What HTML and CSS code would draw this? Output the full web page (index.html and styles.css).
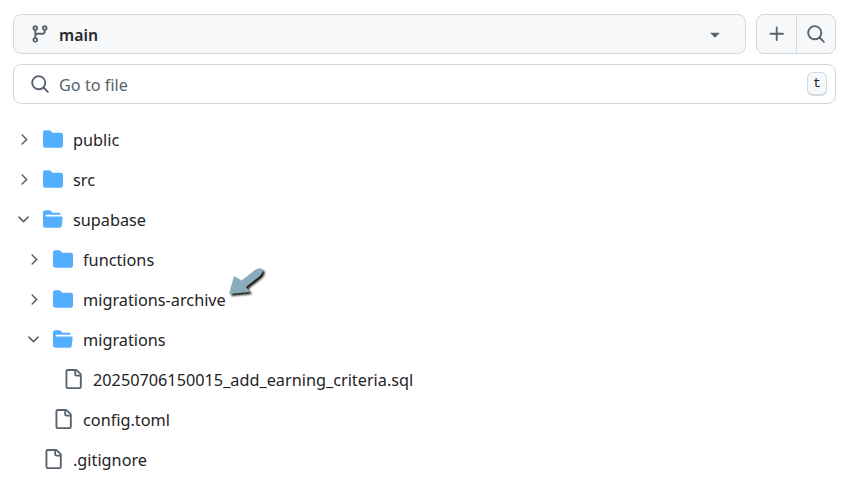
FILE: index.html
```html
<!DOCTYPE html>
<html lang="en">
<head>
  <meta charset="UTF-8" />
  <title>Files</title>
  <link rel="stylesheet" href="styles.css">
</head>
<body>
  <svg class="defs" width="0" height="0" aria-hidden="true">
    <symbol id="i-branch" viewBox="0 0 16 16"><path d="M9.5 3.25a2.25 2.25 0 1 1 3 2.122V6A2.5 2.5 0 0 1 10 8.5H6a1 1 0 0 0-1 1v1.128a2.251 2.251 0 1 1-1.5 0V5.372a2.25 2.25 0 1 1 1.5 0v1.836A2.493 2.493 0 0 1 6 7h4a1 1 0 0 0 1-1v-.628A2.25 2.25 0 0 1 9.5 3.25Zm-6 0a.75.75 0 1 0 1.5 0 .75.75 0 0 0-1.5 0Zm8.25-.75a.75.75 0 1 0 0 1.5.75.75 0 0 0 0-1.5ZM4.25 12a.75.75 0 1 0 0 1.5.75.75 0 0 0 0-1.5Z"/></symbol>
    <symbol id="i-search" viewBox="0 0 16 16"><path d="M10.68 11.74a6 6 0 0 1-7.922-8.982 6 6 0 0 1 8.982 7.922l3.04 3.04a.749.749 0 0 1-.326 1.275.749.749 0 0 1-.734-.215ZM11.5 7a4.499 4.499 0 1 0-8.997 0A4.499 4.499 0 0 0 11.5 7Z"/></symbol>
    <symbol id="i-plus" viewBox="0 0 16 16"><path d="M7.75 2a.75.75 0 0 1 .75.75V7h4.25a.75.75 0 0 1 0 1.5H8.5v4.25a.75.75 0 0 1-1.5 0V8.5H2.75a.75.75 0 0 1 0-1.5H7V2.75A.75.75 0 0 1 7.75 2Z"/></symbol>
    <symbol id="i-caret" viewBox="0 0 16 16"><path d="m4.427 7.427 3.396 3.396a.25.25 0 0 0 .354 0l3.396-3.396A.25.25 0 0 0 11.396 7H4.604a.25.25 0 0 0-.177.427Z"/></symbol>
    <symbol id="i-right" viewBox="0 0 16 16"><path d="M6.22 3.22a.75.75 0 0 1 1.06 0l4.25 4.25a.75.75 0 0 1 0 1.06l-4.25 4.25a.751.751 0 0 1-1.042-.018.751.751 0 0 1-.018-1.042L9.94 8 6.22 4.28a.75.75 0 0 1 0-1.06Z"/></symbol>
    <symbol id="i-down" viewBox="0 0 16 16"><path d="M12.78 5.22a.749.749 0 0 1 0 1.06l-4.25 4.25a.749.749 0 0 1-1.06 0L3.22 6.28a.749.749 0 1 1 1.06-1.06L8 8.939l3.72-3.719a.749.749 0 0 1 1.06 0Z"/></symbol>
    <symbol id="i-folder" viewBox="0 0 16 16"><path d="M1.75 1A1.75 1.75 0 0 0 0 2.75v10.5C0 14.216.784 15 1.75 15h12.5A1.75 1.75 0 0 0 16 13.25v-8.5A1.75 1.75 0 0 0 14.25 3H7.5a.25.25 0 0 1-.2-.1l-.9-1.2C6.07 1.26 5.55 1 5 1H1.75Z"/></symbol>
    <symbol id="i-folder-open" viewBox="0 0 16 16"><path d="M.513 1.513A1.75 1.75 0 0 1 1.75 1h3.5c.55 0 1.07.26 1.4.7l.9 1.2a.25.25 0 0 0 .2.1H13a1 1 0 0 1 1 1v.5H2.75a.75.75 0 0 0 0 1.5h11.978a1 1 0 0 1 .994 1.117L15 13.25A1.75 1.75 0 0 1 13.25 15H1.75A1.75 1.75 0 0 1 0 13.25V2.75c0-.464.184-.91.513-1.237Z"/></symbol>
    <symbol id="i-file" viewBox="0 0 16 16"><path d="M2 1.75C2 .784 2.784 0 3.75 0h6.586c.464 0 .909.184 1.237.513l2.914 2.914c.329.328.513.773.513 1.237v9.586A1.75 1.75 0 0 1 13.25 16h-9.5A1.75 1.75 0 0 1 2 14.25Zm1.75-.25a.25.25 0 0 0-.25.25v12.5c0 .138.112.25.25.25h9.5a.25.25 0 0 0 .25-.25V6h-2.75A1.75 1.75 0 0 1 9 4.25V1.5Zm6.75.062V4.25c0 .138.112.25.25.25h2.688l-.011-.013-2.914-2.914-.013-.011Z"/></symbol>
  </svg>

  <main class="panel">
    <div class="top-row">
      <button class="btn branch-btn">
        <svg class="icon"><use href="#i-branch"/></svg>
        <span class="branch-name">main</span>
        <svg class="icon caret"><use href="#i-caret"/></svg>
      </button>
      <div class="btn-group">
        <button class="btn icon-btn"><svg class="icon"><use href="#i-plus"/></svg></button>
        <button class="btn icon-btn"><svg class="icon"><use href="#i-search"/></svg></button>
      </div>
    </div>

    <div class="file-search">
      <svg class="icon"><use href="#i-search"/></svg>
      <span class="placeholder">Go to file</span>
      <kbd class="hotkey">t</kbd>
    </div>

    <ul class="tree">
      <li class="row">
        <svg class="icon chevron"><use href="#i-right"/></svg>
        <svg class="icon folder"><use href="#i-folder"/></svg>
        <span>public</span>
      </li>
      <li class="row">
        <svg class="icon chevron"><use href="#i-right"/></svg>
        <svg class="icon folder"><use href="#i-folder"/></svg>
        <span>src</span>
      </li>
      <li class="row">
        <svg class="icon chevron"><use href="#i-down"/></svg>
        <svg class="icon folder"><use href="#i-folder-open"/></svg>
        <span>supabase</span>
      </li>
      <li class="row depth-1">
        <svg class="icon chevron"><use href="#i-right"/></svg>
        <svg class="icon folder"><use href="#i-folder"/></svg>
        <span>functions</span>
      </li>
      <li class="row depth-1">
        <svg class="icon chevron"><use href="#i-right"/></svg>
        <svg class="icon folder"><use href="#i-folder"/></svg>
        <span>migrations-archive</span>
      </li>
      <li class="row depth-1">
        <svg class="icon chevron"><use href="#i-down"/></svg>
        <svg class="icon folder"><use href="#i-folder-open"/></svg>
        <span>migrations</span>
      </li>
      <li class="row depth-2">
        <span class="no-chevron"></span>
        <svg class="icon file"><use href="#i-file"/></svg>
        <span>20250706150015_add_earning_criteria.sql</span>
      </li>
      <li class="row depth-1">
        <span class="no-chevron"></span>
        <svg class="icon file"><use href="#i-file"/></svg>
        <span>config.toml</span>
      </li>
      <li class="row">
        <span class="no-chevron"></span>
        <svg class="icon file"><use href="#i-file"/></svg>
        <span>.gitignore</span>
      </li>
    </ul>
  </main>

  <!-- annotation arrow drawn on top of the screenshot -->
  <svg class="arrow" width="842" height="483" viewBox="0 0 842 483" aria-hidden="true">
    <path class="arrow-body" d="M229 294 L234 276 L241 281 L255 270 Q260 267 262 269 Q264 272 260 276 L246 287 L250 292 Z"/>
  </svg>
</body>
</html>
```

FILE: styles.css
```css
body {
  margin: 0;
  background: #ffffff;
  color: #1f2328;
  font-family: "Noto Sans", "Open Sans", sans-serif;
  font-size: 16.25px;
}
.defs {
  position: absolute;
}
.panel {
  padding: 14px 6px 0 13px;
}
.icon {
  width: 20px;
  height: 20px;
  flex: none;
  fill: #59636e;
}
.top-row {
  display: flex;
  gap: 10px;
}
.btn {
  display: flex;
  align-items: center;
  height: 40px;
  padding: 0;
  background: #f6f8fa;
  border: 1px solid #d1d9e0;
  border-radius: 8px;
  color: #25292e;
  font: inherit;
}
.branch-btn {
  flex: 1;
  padding: 0 20px 0 16px;
}
.branch-name {
  margin-left: 9px;
  padding-top: 2px;
  font-size: 15.8px;
  font-weight: 600;
}
.caret {
  margin-left: auto;
}
.btn-group {
  display: flex;
}
.icon-btn {
  justify-content: center;
  width: 40px;
}
.icon-btn:first-child {
  width: 41px;
  border-radius: 8px 0 0 8px;
}
.icon-btn:last-child {
  margin-left: -1px;
  border-radius: 0 8px 8px 0;
}
.file-search {
  display: flex;
  align-items: center;
  height: 38px;
  margin-top: 10px;
  padding: 0 8px 0 16px;
  border: 1px solid #d1d9e0;
  border-radius: 8px;
}
.placeholder {
  margin-left: 9px;
  padding-top: 2px;
  color: #59636e;
}
.hotkey {
  margin-left: auto;
  padding: 0 5px;
  height: 21px;
  line-height: 21px;
  background: #f6f8fa;
  border: 1px solid #d1d9e0;
  border-bottom-width: 2px;
  border-radius: 6px;
  color: #1f2328;
  font-family: "Liberation Mono", monospace;
  font-size: 13.5px;
}
.tree {
  margin: 15px 0 0;
  padding: 0;
  list-style: none;
}
.row {
  display: flex;
  align-items: center;
  height: 40px;
  color: #1f2328;
}
.row span:last-child {
  margin-left: 10px;
  padding-top: 2px;
}
.chevron {
  width: 17px;
  height: 17px;
  margin: 0 11px 0 2px;
}
.no-chevron {
  width: 30px;
  flex: none;
}
.folder {
  fill: #54aeff;
}
.depth-1 {
  padding-left: 10px;
}
.depth-2 {
  padding-left: 20px;
}
.arrow {
  position: absolute;
  top: 0;
  left: 0;
  pointer-events: none;
}
.arrow-body {
  fill: #8aabba;
  filter: drop-shadow(2px 2px 1px #111111);
}
```
